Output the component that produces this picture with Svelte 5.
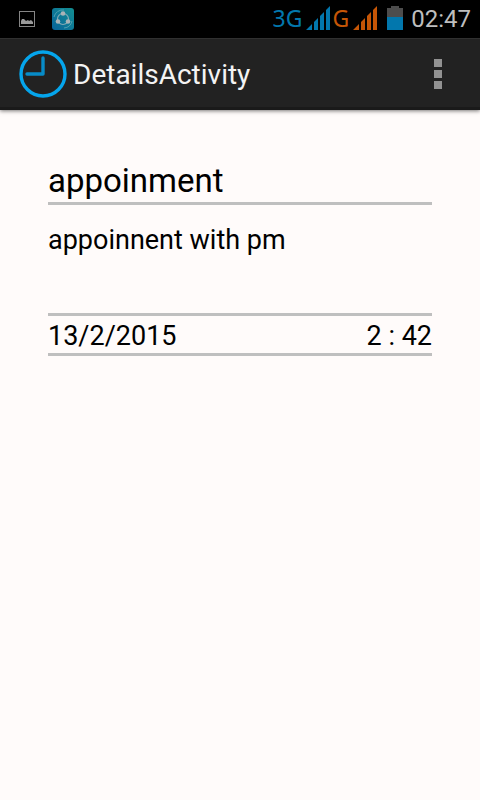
<script>
  const appointment = {
    title: 'appoinment',
    details: 'appoinnent with pm',
    date: '13/2/2015',
    time: '2 : 42'
  };
</script>

{#snippet signal()}
  <svg class="signal" width="24" height="24" viewBox="0 0 24 24" fill="currentColor" aria-hidden="true">
    <path d="M0 24 6 18V24ZM8 24V16L12 12V24ZM14 24V10L18 6V24ZM20 24V4L24 0V24Z" />
  </svg>
{/snippet}

<div class="screen">
  <div class="status">
    <svg class="photo" width="16" height="16" viewBox="0 0 16 16" aria-hidden="true">
      <rect x=".5" y=".5" width="15" height="15" fill="#000" stroke="#858585" />
      <path d="M2 13V10L3 8H5L7 10 9 9 10 10 12 9 14 11V13Z" fill="#999" />
    </svg>
    <svg width="22" height="22" viewBox="0 0 22 22" aria-hidden="true">
      <defs>
        <linearGradient id="share" x1="0" y1="1" x2="1" y2="0">
          <stop offset="0" stop-color="#08629a" />
          <stop offset="1" stop-color="#138f91" />
        </linearGradient>
      </defs>
      <rect width="22" height="22" rx="3" fill="url(#share)" />
      <path d="M2 9A9 9 0 0 1 12 2M20 13A9 9 0 0 1 12 20" fill="none" stroke="#4e9fb0" />
      <circle cx="11" cy="11" r="5.5" fill="none" stroke="#83aab5" stroke-width="1.2" />
      <g fill="#a9b3b7">
        <circle cx="11" cy="5.5" r="2.3" />
        <circle cx="6" cy="13.5" r="2.3" />
        <circle cx="16" cy="13.5" r="2.3" />
      </g>
    </svg>
    <div class="system">
      <span class="network blue">3G{@render signal()}</span>
      <span class="network orange">G{@render signal()}</span>
      <svg class="battery" width="16" height="24" viewBox="0 0 16 24" aria-hidden="true">
        <path d="M0 2H4V0H12V2H16V24H0Z" fill="#4d4d4d" />
        <path d="M0 11H16V24H0Z" fill="#0277ad" />
      </svg>
      <time>02:47</time>
    </div>
  </div>

  <header>
    <svg width="48" height="48" viewBox="0 0 48 48" fill="none" stroke="#05a5ec" aria-hidden="true">
      <circle cx="24" cy="24" r="22" stroke-width="3.4" />
      <path d="M24 8V24H8" stroke="#078cc8" stroke-width="3.4" stroke-linecap="round" stroke-linejoin="round" />
    </svg>
    <h1>DetailsActivity</h1>
    <button aria-label="More options">
      <svg width="8" height="30" viewBox="0 0 8 30" fill="#929292" aria-hidden="true">
        <path d="M0 0H8V8H0ZM0 11H8V19H0ZM0 22H8V30H0Z" />
      </svg>
    </button>
  </header>

  <main>
    <h2>{appointment.title}</h2>
    <p class="details">{appointment.details}</p>
    <div class="when">
      <span>{appointment.date}</span>
      <span>{appointment.time}</span>
    </div>
  </main>
</div>

<style>
  :global(body) {
    margin: 0;
    background: #fffbfa;
  }
  .screen {
    min-height: 100vh;
    background: #fffbfa;
    color: #000;
    font-family: Roboto, "Noto Sans", sans-serif;
  }
  .status {
    display: flex;
    align-items: center;
    gap: 17px;
    height: 38px;
    box-sizing: border-box;
    padding: 0 9px 0 19px;
    background: #000;
  }
  .system {
    display: flex;
    align-items: center;
    margin-left: auto;
    padding-bottom: 2px;
  }
  .network {
    display: flex;
    align-items: center;
    font-family: "Noto Sans", sans-serif;
    font-size: 23px;
    line-height: 36px;
  }
  .signal {
    margin-left: 4px;
  }
  .blue {
    color: #0277ad;
  }
  .orange {
    margin-left: 2px;
    color: #c65606;
  }
  .battery {
    margin: 0 8px 0 10px;
  }
  time {
    padding-top: 2px;
    color: #bebebe;
    font-size: 24px;
    line-height: 36px;
  }
  header {
    display: flex;
    align-items: center;
    height: 72px;
    box-sizing: border-box;
    padding: 2px 18px 0 19px;
    background: #222;
    border-top: 1px solid #303030;
    border-bottom: 3px solid #1a1a1a;
    box-shadow: 0 1px 4px #0008;
  }
  h1 {
    margin: 0 0 0 6px;
    padding-top: 2px;
    color: #f3f3f3;
    font-size: 28px;
    font-weight: 400;
    line-height: 36px;
  }
  button {
    display: flex;
    justify-content: center;
    align-items: center;
    width: 48px;
    height: 48px;
    margin-left: auto;
    padding: 0;
    border: 0;
    background: none;
  }
  main {
    padding: 50px 48px;
  }
  h2 {
    margin: 0;
    border-bottom: 3px solid #bfbfbf;
    font-size: 33px;
    font-weight: 400;
    line-height: 42px;
  }
  .details {
    min-height: 90px;
    margin: 0;
    padding-top: 18px;
    font-size: 27px;
    line-height: 34px;
  }
  .when {
    display: flex;
    justify-content: space-between;
    padding-top: 3px;
    border-top: 3px solid #bfbfbf;
    border-bottom: 3px solid #bfbfbf;
    font-size: 27px;
    line-height: 34px;
  }
</style>
